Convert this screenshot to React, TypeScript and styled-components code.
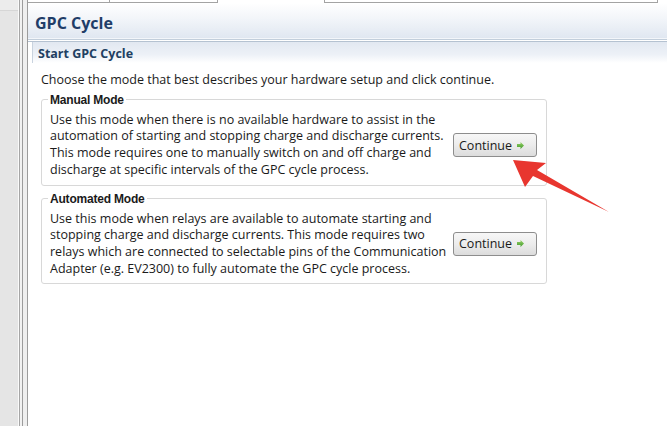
import React from "react";
import styled, { createGlobalStyle } from "styled-components";

const GlobalStyle = createGlobalStyle`
  html, body { margin: 0; padding: 0; background: #ffffff; }
  body { width: 667px; height: 426px; overflow: hidden; font-family: "Open Sans", "Noto Sans", sans-serif; }
  #root { width: 667px; height: 426px; }
`;

const Page = styled.div`
  position: relative;
  display: flex;
  width: 667px;
  height: 426px;
  overflow: hidden;
`;

const SideDock = styled.div`
  width: 18px;
  flex: 0 0 18px;
  background: #e5e5e5;
  border-right: 1px solid #fafafa;
  display: flex;
  flex-direction: column;
`;

const DockTop = styled.div`
  height: 10px;
  background: #ececec;
  border-bottom: 1px solid #d6d6d6;
`;

const Sash = styled.div<{ $line: string; $fill: string; $pad: number }>`
  display: flex;
  flex: 1;
  border-left: 1px solid ${(p) => p.$line};
  padding-left: ${(p) => p.$pad}px;
  background: ${(p) => p.$fill};
`;

const Editor = styled.div`
  flex: 1;
  display: flex;
  flex-direction: column;
  background: #ffffff;
  border-left: 1px solid #9c9c9c;
  min-width: 0;
`;

const TabStrip = styled.div`
  display: flex;
  height: 3px;
`;

const Tab = styled.div<{ $w?: number; $selected?: boolean; $grow?: boolean; $edgeLeft?: boolean }>`
  box-sizing: border-box;
  height: 3px;
  ${(p) => (p.$grow ? "flex: 1;" : `flex: 0 0 ${p.$w}px;`)}
  border-bottom: ${(p) => (p.$selected ? "none" : "1px solid #a3a3a3")};
  border-right: ${(p) => (p.$selected ? "none" : "1px solid #a3a3a3")};
  border-left: ${(p) => (p.$edgeLeft ? "1px solid #a3a3a3" : "none")};
`;

const TabTail = styled.div`
  flex: 0 0 9px;
`;

const Header = styled.div`
  box-sizing: border-box;
  height: 36px;
  display: flex;
  align-items: center;
  padding: 5px 0 0 7px;
  background: linear-gradient(#ffffff 0%, #f2f5f9 45%, #e0e7f1 100%);
  border-bottom: 1px solid #f3f6fa;
`;

const Title = styled.h1`
  margin: 0;
  font-family: "Open Sans", sans-serif;
  font-weight: 700;
  font-size: 16px;
  color: #1f3d68;
`;

const HeaderRule = styled.div`
  height: 1px;
  background: #ffffff;
  border-top: 1px solid #c2cedb;
  border-bottom: 1px solid #b5c2d1;
`;

const Section = styled.div`
  margin-left: 4px;
  display: flex;
  flex-direction: column;
`;

const SectionBar = styled.div`
  box-sizing: border-box;
  height: 21px;
  display: flex;
  align-items: center;
  padding: 2px 0 0 5px;
  border-left: 1px solid #c9d3df;
  background: linear-gradient(#e2e8f1 0%, #edf1f7 60%, #ffffff 100%);
`;

const SectionTitle = styled.h2`
  margin: 0;
  font-family: "Open Sans", sans-serif;
  font-weight: 700;
  font-size: 12.5px;
  color: #223f62;
`;

const Content = styled.div`
  padding: 9px 0 0 9px;
  display: flex;
  flex-direction: column;
  width: 506px;
`;

const Intro = styled.p`
  margin: 0 0 4px 0;
  font-size: 12.5px;
  line-height: 16.7px;
  color: #1a1a1a;
  white-space: nowrap;
`;

const Group = styled.fieldset<{ $gap?: number }>`
  margin: ${(p) => p.$gap ?? 0}px 0 0 0;
  padding: 0 8px 6px 8px;
  border: 1px solid #d8d8d8;
  border-radius: 3px;
  min-width: 0;
`;

const Legend = styled.legend`
  padding: 0 2px;
  margin-left: -2px;
  font-family: "Liberation Sans", Arial, sans-serif;
  font-weight: 700;
  font-size: 12px;
  line-height: 14px;
  color: #1a1a1a;
  letter-spacing: -0.2px;
`;

const GroupBody = styled.div`
  display: flex;
  align-items: center;
  margin-top: 5px;
`;

const Description = styled.p`
  margin: 0;
  flex: 0 0 403px;
  font-size: 12.5px;
  line-height: 16.7px;
  color: #1a1a1a;
  white-space: nowrap;
`;

const ContinueButton = styled.button`
  box-sizing: border-box;
  width: 84px;
  height: 24px;
  display: flex;
  align-items: center;
  padding: 0 0 0 5px;
  border: 1px solid #8d8d8d;
  border-radius: 3px;
  background: linear-gradient(#f7f7f7 0%, #ececec 50%, #dcdcdc 100%);
  font-family: "Open Sans", sans-serif;
  font-size: 12.5px;
  color: #1a1a1a;
  cursor: pointer;
`;

const ButtonLabel = styled.span`
  flex: 1;
  text-align: left;
`;

const ButtonIcon = styled.span`
  display: flex;
  width: 9px;
  margin-right: 11px;
`;

const Annotation = styled.svg`
  position: absolute;
  left: 0;
  top: 0;
  pointer-events: none;
`;

const GreenArrow = () => (
  <svg width="9" height="9" viewBox="0 0 9 9">
    <defs>
      <linearGradient id="ga" x1="0" y1="0" x2="0" y2="1">
        <stop offset="0" stopColor="#9ad36a" />
        <stop offset="1" stopColor="#3f9a2a" />
      </linearGradient>
    </defs>
    <path d="M1 3 H4.5 V1 L8 4.5 L4.5 8 V6 H1 Z" fill="url(#ga)" />
  </svg>
);

type ModeProps = { title: string; lines: string[]; gap?: number };

const ModeGroup = ({ title, lines, gap }: ModeProps) => (
  <Group $gap={gap}>
    <Legend>{title}</Legend>
    <GroupBody>
      <Description>
        {lines.map((l, i) => (
          <React.Fragment key={i}>
            {l}
            {i < lines.length - 1 && <br />}
          </React.Fragment>
        ))}
      </Description>
      <ContinueButton type="button">
        <ButtonLabel>Continue</ButtonLabel>
        <ButtonIcon>
          <GreenArrow />
        </ButtonIcon>
      </ContinueButton>
    </GroupBody>
  </Group>
);

export default function App() {
  return (
    <>
      <GlobalStyle />
      <Page>
        <SideDock>
          <DockTop />
        </SideDock>
        <Sash $line="#a6a6a6" $fill="#f2f2f2" $pad={2}>
          <Sash $line="#9c9c9c" $fill="#efefef" $pad={4}>
            <Editor>
              <TabStrip>
                <Tab $w={82} />
                <Tab $w={108} />
                <Tab $w={106} $selected />
                <Tab $grow $edgeLeft />
                <TabTail />
              </TabStrip>
              <Header>
                <Title>GPC Cycle</Title>
              </Header>
              <HeaderRule />
              <Section>
                <SectionBar>
                  <SectionTitle>Start GPC Cycle</SectionTitle>
                </SectionBar>
                <Content>
                  <Intro>Choose the mode that best describes your hardware setup and click continue.</Intro>
                  <ModeGroup
                    title="Manual Mode"
                    lines={[
                      "Use this mode when there is no available hardware to assist in the",
                      "automation of starting and stopping charge and discharge currents.",
                      "This mode requires one to manually switch on and off charge and",
                      "discharge at specific intervals of the GPC cycle process.",
                    ]}
                  />
                  <ModeGroup
                    gap={6}
                    title="Automated Mode"
                    lines={[
                      "Use this mode when relays are available to automate starting and",
                      "stopping charge and discharge currents. This mode requires two",
                      "relays which are connected to selectable pins of the Communication",
                      "Adapter (e.g. EV2300) to fully automate the GPC cycle process.",
                    ]}
                  />
                </Content>
              </Section>
            </Editor>
          </Sash>
        </Sash>
        <Annotation width="667" height="426" viewBox="0 0 667 426">
          <path
            d="M513 160 L546 163 L537 170 L609 212 L533 176 L525 187 Z"
            fill="#e8362f"
          />
        </Annotation>
      </Page>
    </>
  );
}
